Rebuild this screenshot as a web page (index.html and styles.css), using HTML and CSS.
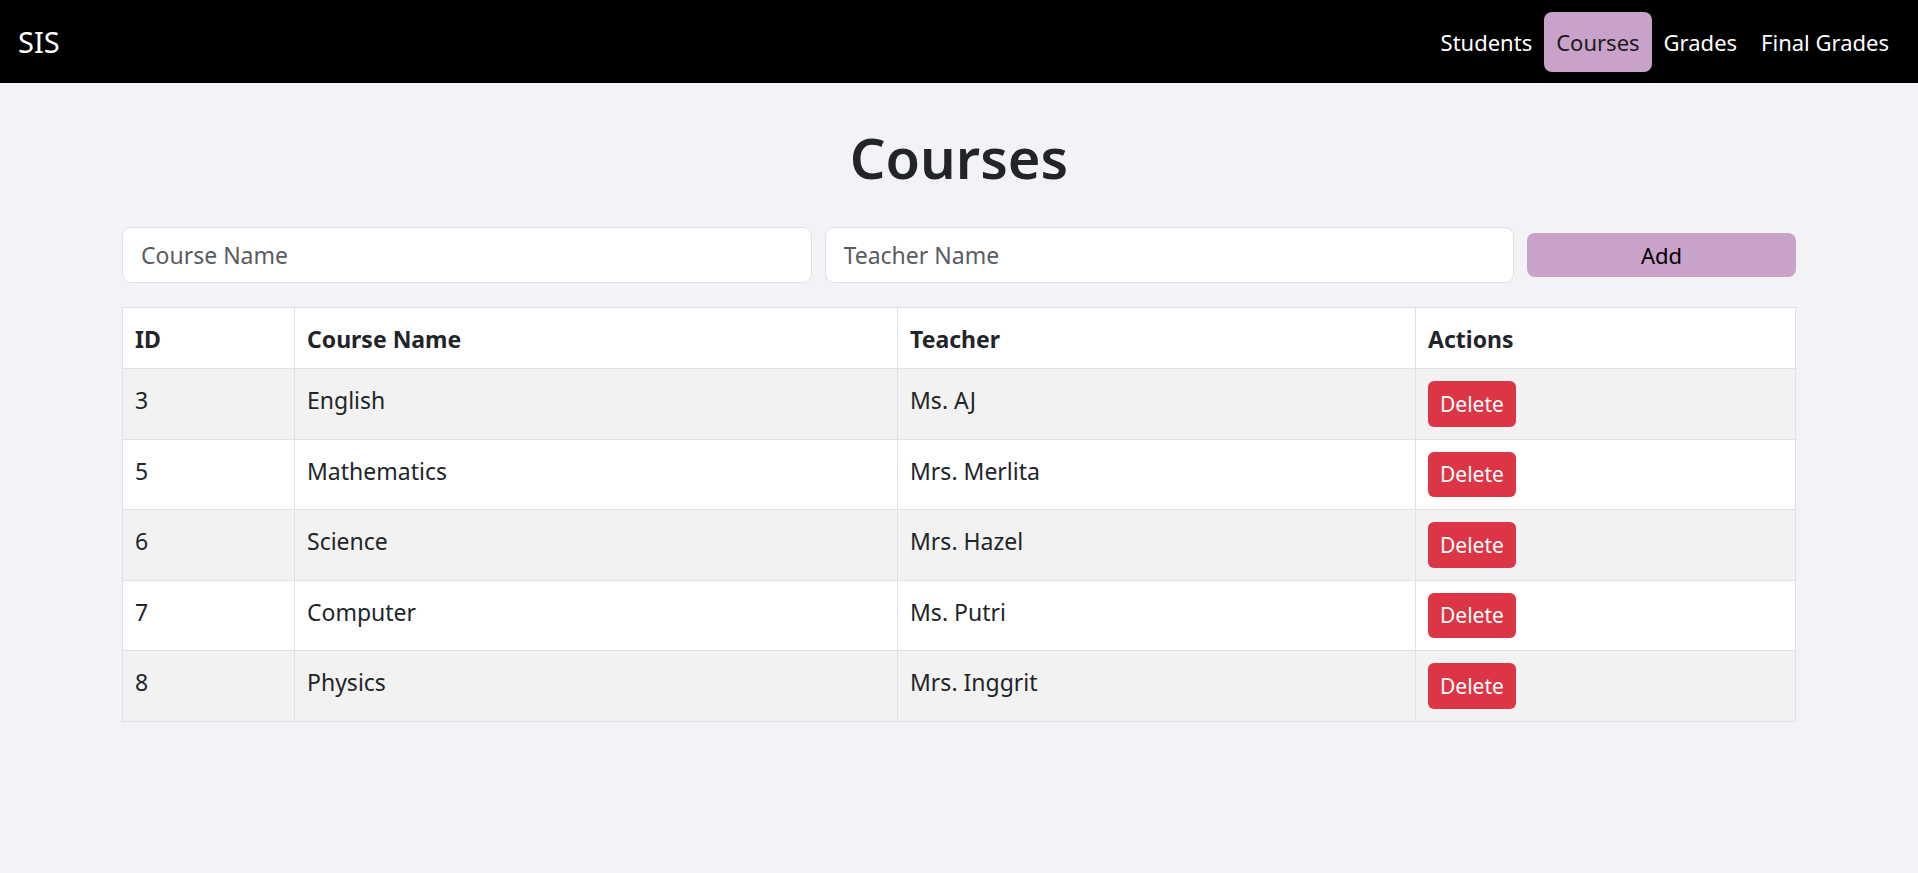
FILE: index.html
```html
<!DOCTYPE html>
<html lang="en">
<head>
<meta charset="utf-8">
<title>SIS - Courses</title>
<link rel="stylesheet" href="styles.css">
</head>
<body>
<nav class="navbar">
  <a class="brand" href="#">SIS</a>
  <ul class="nav">
    <li><a class="nav-link" href="#">Students</a></li>
    <li><a class="nav-link active" href="#">Courses</a></li>
    <li><a class="nav-link" href="#">Grades</a></li>
    <li><a class="nav-link" href="#">Final Grades</a></li>
  </ul>
</nav>
<main class="container">
  <h1 class="title">Courses</h1>
  <form class="add-form">
    <input class="field" type="text" placeholder="Course Name">
    <input class="field" type="text" placeholder="Teacher Name">
    <button class="btn-add" type="button">Add</button>
  </form>
  <table class="table">
    <thead>
      <tr>
        <th class="col-id">ID</th>
        <th class="col-name">Course Name</th>
        <th class="col-teacher">Teacher</th>
        <th class="col-actions">Actions</th>
      </tr>
    </thead>
    <tbody>
      <tr><td>3</td><td>English</td><td>Ms. AJ</td><td><button class="btn-delete" type="button">Delete</button></td></tr>
      <tr><td>5</td><td>Mathematics</td><td>Mrs. Merlita</td><td><button class="btn-delete" type="button">Delete</button></td></tr>
      <tr><td>6</td><td>Science</td><td>Mrs. Hazel</td><td><button class="btn-delete" type="button">Delete</button></td></tr>
      <tr><td>7</td><td>Computer</td><td>Ms. Putri</td><td><button class="btn-delete" type="button">Delete</button></td></tr>
      <tr><td>8</td><td>Physics</td><td>Mrs. Inggrit</td><td><button class="btn-delete" type="button">Delete</button></td></tr>
    </tbody>
  </table>
</main>
</body>
</html>
```
FILE: styles.css
```css
* { box-sizing: border-box; }

html, body {
  margin: 0;
  padding: 0;
}

body {
  background: #f2f2f7;
  color: #212529;
  font-family: "Noto Sans", "Open Sans", sans-serif;
  font-size: 23px;
  line-height: 36px;
}

.navbar {
  background: #000;
  height: 83px;
  display: flex;
  align-items: center;
  justify-content: space-between;
  padding: 0 17px 0 18px;
}

.brand {
  color: #fff;
  text-decoration: none;
  font-size: 29px;
  line-height: 45px;
}

.nav {
  list-style: none;
  margin: 0;
  padding: 0;
  display: flex;
}

.nav-link {
  display: block;
  color: #fff;
  text-decoration: none;
  padding: 12px 12px;
  line-height: 36px;
  font-size: 22px;
  border-radius: 8px;
}

.nav-link.active {
  background: #c8a2c8;
  color: #1a1a1a;
}

.container {
  max-width: 1710px;
  margin: 0 auto;
  padding: 38px 18px 0;
}

.title {
  margin: 0 0 34px;
  text-align: center;
  font-size: 56px;
  font-weight: 600;
  line-height: 72px;
}

.add-form {
  display: grid;
  grid-template-columns: 1fr 1fr 269px;
  column-gap: 13px;
  align-items: center;
  margin: 0 0 24px;
}

.field {
  height: 56px;
  padding: 9px 18px;
  font: inherit;
  color: #212529;
  background: #fff;
  border: 1px solid #dee2e6;
  border-radius: 9px;
}

.field::placeholder {
  color: #595c5f;
}

.btn-add {
  height: 44px;
  font: inherit;
  font-size: 22px;
  color: #000;
  background: #c8a2c8;
  border: 0;
  border-radius: 8px;
}

.table {
  width: 100%;
  border-collapse: collapse;
  table-layout: fixed;
  background: #fff;
  vertical-align: top;
}

.table th,
.table td {
  border: 1px solid #dee2e6;
  padding: 13px 12px 12px;
  text-align: left;
  vertical-align: top;
  line-height: 36px;
}

.table th {
  font-weight: 700;
  padding-bottom: 11px;
}

.table tbody tr:nth-child(odd) td {
  background: #f2f2f2;
}

.col-id { width: 172px; }
.col-name { width: 603px; }
.col-teacher { width: 518px; }
.col-actions { width: auto; }

.btn-delete {
  display: block;
  height: 45.5px;
  margin-top: -1px;
  padding: 0 12px;
  font: inherit;
  font-size: 21px;
  line-height: 44px;
  color: #fff;
  background: #dc3545;
  border: 0;
  border-radius: 6px;
}
```
